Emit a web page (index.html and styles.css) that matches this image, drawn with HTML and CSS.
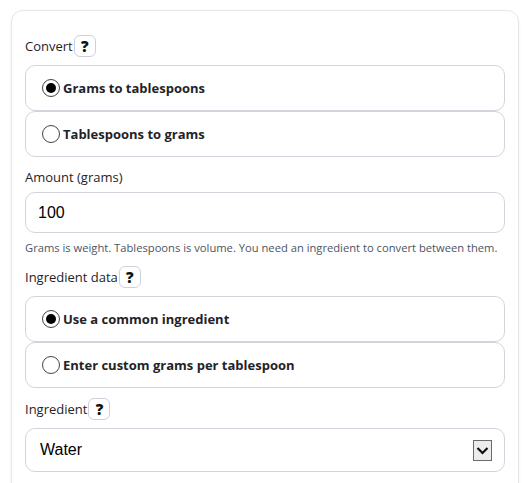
FILE: index.html
```html
<!DOCTYPE html>
<html lang="en">
<head>
<meta charset="utf-8">
<title>Grams to tablespoons</title>
<link rel="stylesheet" href="styles.css">
</head>
<body>
<div class="page">
  <div class="card">
    <div class="field">
      <div class="label-row"><span class="label">Convert</span><span class="help">?</span></div>
      <div class="options">
        <label class="option"><span class="radio checked"></span><span class="opt-text">Grams to tablespoons</span></label>
        <label class="option"><span class="radio"></span><span class="opt-text">Tablespoons to grams</span></label>
      </div>
    </div>
    <div class="field">
      <div class="label plain">Amount (grams)</div>
      <div class="input">100</div>
      <div class="hint">Grams is weight. Tablespoons is volume. You need an ingredient to convert between them.</div>
    </div>
    <div class="field">
      <div class="label-row"><span class="label">Ingredient data</span><span class="help">?</span></div>
      <div class="options">
        <label class="option"><span class="radio checked"></span><span class="opt-text">Use a common ingredient</span></label>
        <label class="option"><span class="radio"></span><span class="opt-text">Enter custom grams per tablespoon</span></label>
      </div>
    </div>
    <div class="field">
      <div class="label-row"><span class="label">Ingredient</span><span class="help">?</span></div>
      <div class="select">
        <span class="select-value">Water</span>
        <span class="arrow"><svg width="13" height="9" viewBox="0 0 13 9"><path d="M1.5 2 L6.5 7 L11.5 2" fill="none" stroke="#111" stroke-width="2.2"/></svg></span>
      </div>
    </div>
  </div>
</div>
</body>
</html>
```
FILE: styles.css
```css
* { box-sizing: border-box; }
html, body { margin: 0; background: #fff; }
body {
  font-family: "Open Sans", "Noto Sans", sans-serif;
  color: #1f2328;
}
.page {
  padding: 10px 11px 0;
  height: 483px;
  overflow: hidden;
}
.card {
  border: 1px solid #e5e7eb;
  border-radius: 12px;
  padding: 24px 13px 40px;
  box-shadow: 0 1px 3px rgba(0,0,0,0.06);
  background: #fff;
}
.field { margin-bottom: 10px; }
.label-row {
  display: flex;
  align-items: center;
  height: 22px;
  margin-bottom: 8px;
}
.label {
  font-size: 13px;
  line-height: 20px;
  color: #1f2328;
}
.label.plain { margin-bottom: 5px; }
.help {
  display: inline-flex;
  align-items: center;
  justify-content: center;
  width: 22px;
  height: 22px;
  border: 1px solid #cbd2dc;
  border-radius: 6px;
  font-weight: 800;
  font-size: 15px;
  color: #111;
  background: #fff;
  margin-left: 1px;
}
.options { display: flex; flex-direction: column; }
.option {
  display: flex;
  align-items: center;
  height: 46px;
  padding: 0 16px;
  border: 1px solid #d1d5db;
  border-radius: 10px;
  background: #fff;
}
.radio {
  width: 18px;
  height: 18px;
  border: 1px solid #444;
  border-radius: 50%;
  display: flex;
  align-items: center;
  justify-content: center;
  flex: none;
  background: #fff;
}
.radio.checked::after {
  content: "";
  width: 10px;
  height: 10px;
  border-radius: 50%;
  background: #000;
}
.opt-text {
  margin-left: 3px;
  font-weight: 700;
  font-size: 13px;
  color: #1f2328;
}
.input {
  height: 41px;
  border: 1px solid #d1d5db;
  border-radius: 10px;
  padding: 0 12px;
  display: flex;
  align-items: center;
  font-family: "Liberation Sans", Arial, sans-serif;
  font-size: 16px;
  color: #000;
}
.hint {
  margin-top: 7px;
  font-size: 11.2px;
  line-height: 16px;
  color: #4b5563;
}
.select {
  height: 44px;
  border: 1px solid #d1d5db;
  border-radius: 10px;
  padding: 0 12px 0 14px;
  display: flex;
  align-items: center;
  justify-content: space-between;
  font-family: "Liberation Sans", Arial, sans-serif;
  font-size: 16px;
  color: #000;
}
.arrow {
  width: 19px;
  height: 21px;
  border: 1px solid #6b6b6b;
  background: #ececec;
  display: flex;
  align-items: center;
  justify-content: center;
}
```
